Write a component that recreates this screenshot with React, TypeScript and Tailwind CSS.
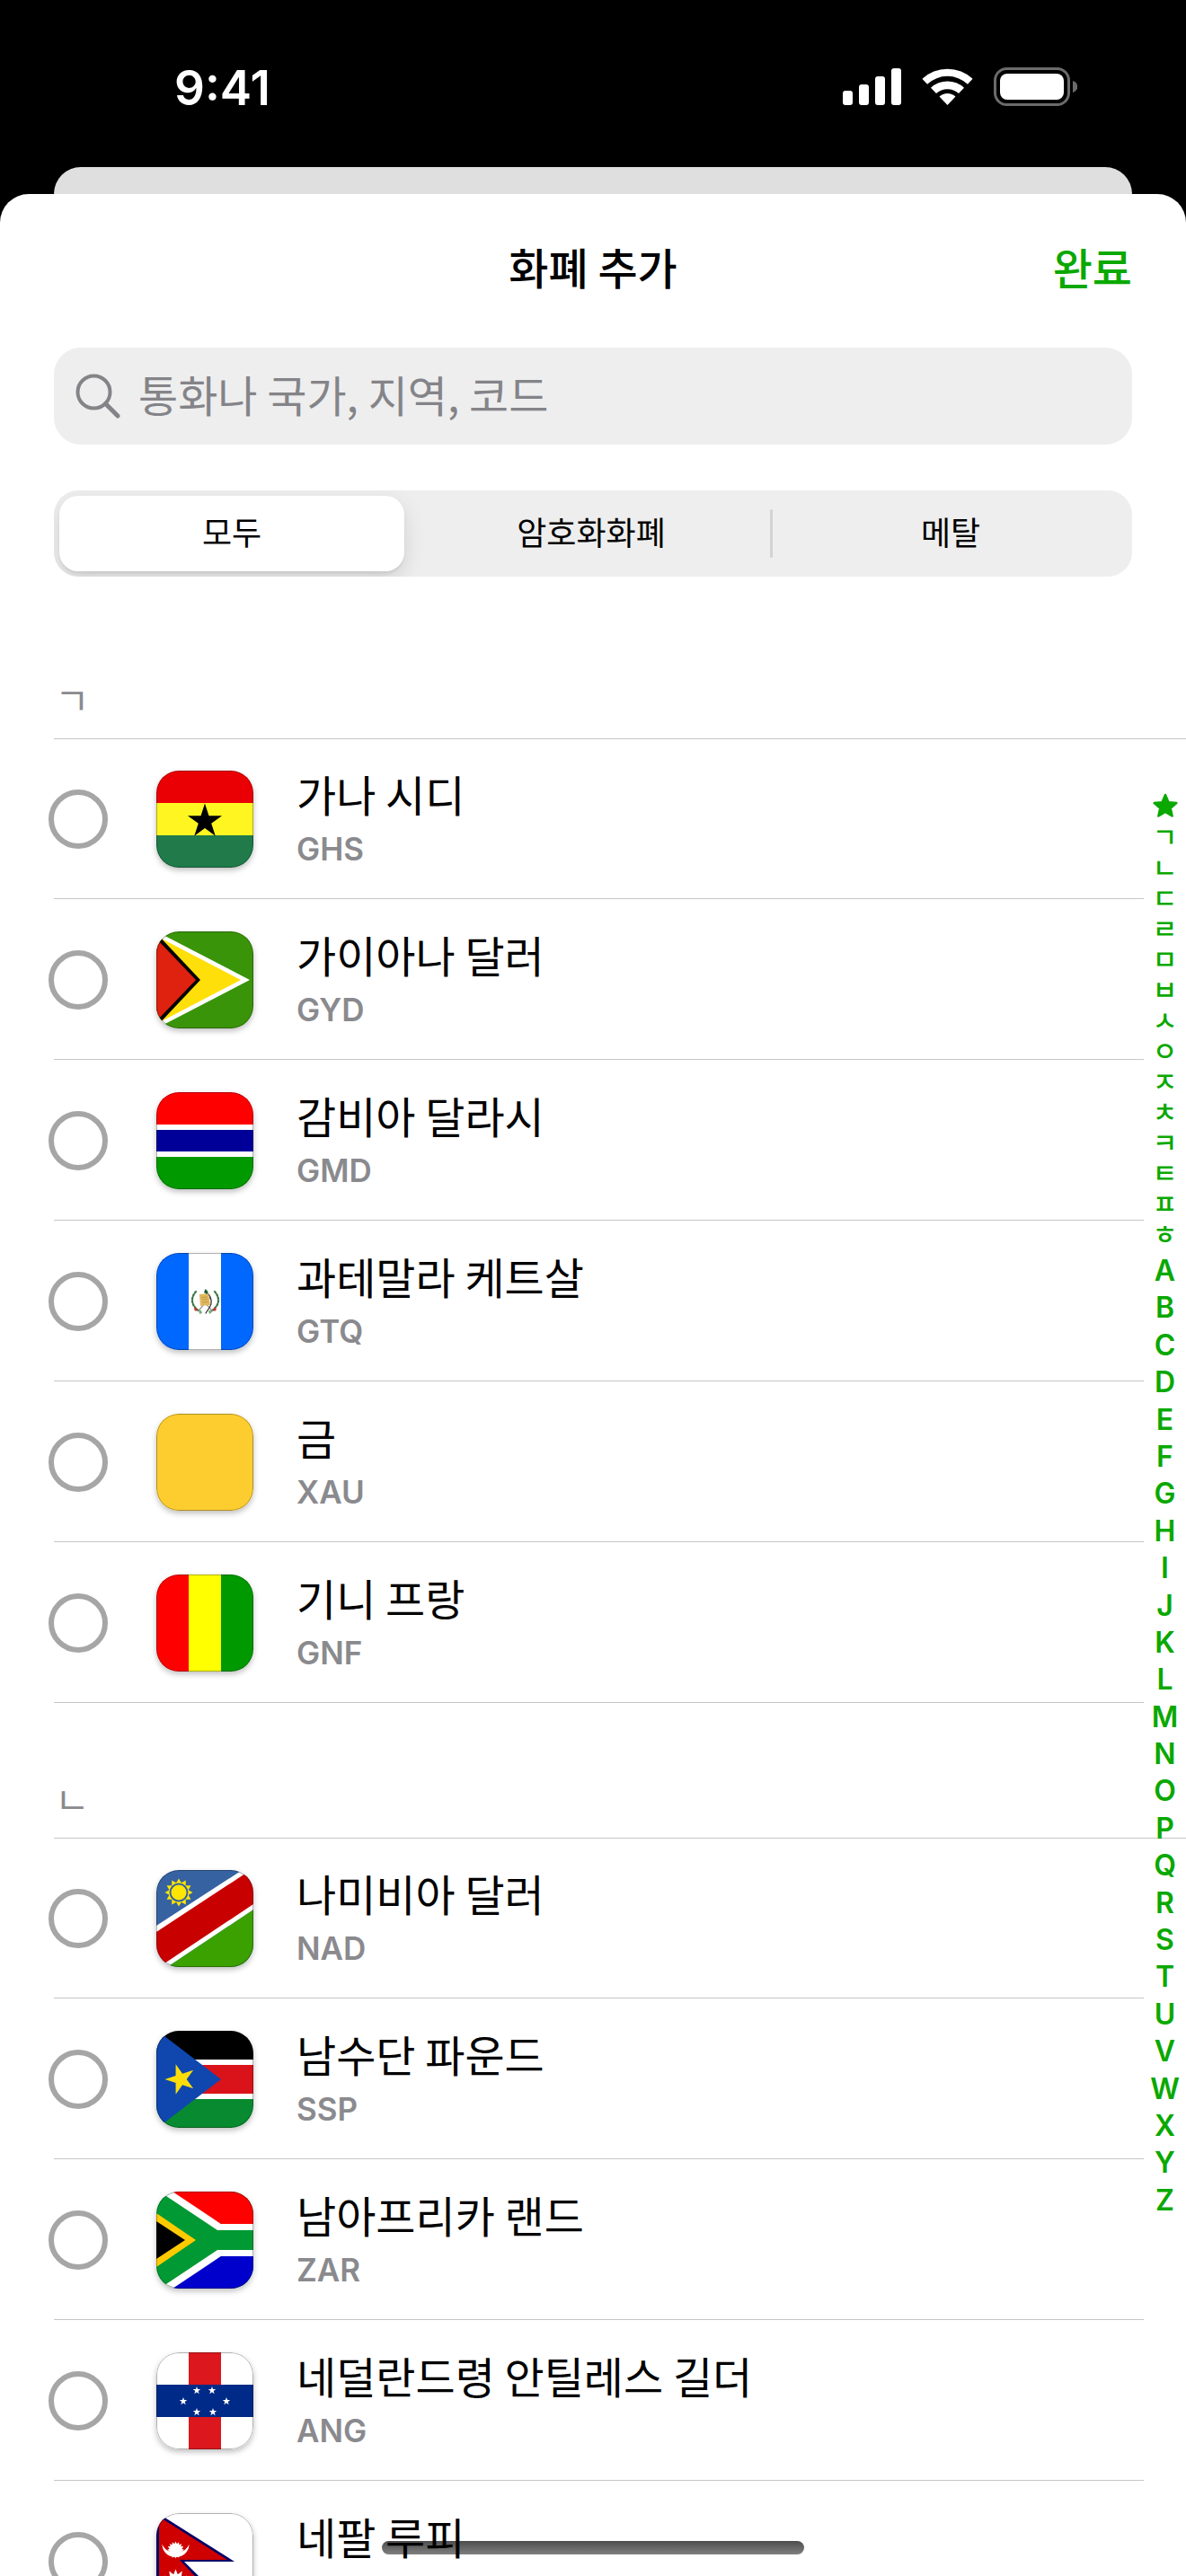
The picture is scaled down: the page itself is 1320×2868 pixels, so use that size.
import { useState } from "react";
import type { ReactNode } from "react";

interface Currency {
    code: string;
    name: string;
}

interface Section {
    letter: string;
    currencies: Currency[];
}

const sections: Section[] = [
    {
        letter: "ㄱ",
        currencies: [
            { code: "GHS", name: "가나 시디" },
            { code: "GYD", name: "가이아나 달러" },
            { code: "GMD", name: "감비아 달라시" },
            { code: "GTQ", name: "과테말라 케트살" },
            { code: "XAU", name: "금" },
            { code: "GNF", name: "기니 프랑" },
        ],
    },
    {
        letter: "ㄴ",
        currencies: [
            { code: "NAD", name: "나미비아 달러" },
            { code: "SSP", name: "남수단 파운드" },
            { code: "ZAR", name: "남아프리카 랜드" },
            { code: "ANG", name: "네덜란드령 안틸레스 길더" },
            { code: "NPR", name: "네팔 루피" },
        ],
    },
];

const tabs = ["모두", "암호화화폐", "메탈"];
const jamo = "ㄱㄴㄷㄹㅁㅂㅅㅇㅈㅊㅋㅌㅍㅎ".split("");
const latin = "ABCDEFGHIJKLMNOPQRSTUVWXYZ".split("");

// points of a star or sunburst, first tip at `turn` degrees from the top
function burst(cx: number, cy: number, outer: number, inner: number, tips = 5, turn = 0) {
    return Array.from({ length: tips * 2 }, (_, i) => {
        const a = ((turn - 90 + (i * 180) / tips) * Math.PI) / 180;
        const r = i % 2 ? inner : outer;
        return `${(cx + r * Math.cos(a)).toFixed(2)},${(cy + r * Math.sin(a)).toFixed(2)}`;
    }).join(" ");
}

const flags: Record<string, ReactNode> = {
    GHS: <>
        <path fill="#ea0004" d="M0 0h108v36H0z" />
        <path fill="#fff520" d="M0 36h108v36H0z" />
        <path fill="#207a4a" d="M0 72h108v36H0z" />
        <polygon points={burst(54, 56.5, 20, 7.6)} />
    </>,
    GYD: <>
        <path fill="#3a9409" d="M0 0h108v108H0z" />
        <path fill="#fff" d="M0 0l104 54L0 108z" />
        <path fill="#ffdf0a" d="M0 5l94 49L0 103z" />
        <path d="M0 2l49 52L0 106z" />
        <path fill="#df2110" d="M0 8l44 46L0 100z" />
    </>,
    GMD: <>
        <path fill="#fff" d="M0 0h108v108H0z" />
        <path fill="#f00" d="M0 0h108v36H0z" />
        <path fill="#009" d="M0 42h108v24H0z" />
        <path fill="#090" d="M0 72h108v36H0z" />
    </>,
    GTQ: <>
        <path fill="#0067ff" d="M0 0h108v108H0z" />
        <path fill="#fff" d="M36 0h36v108H36z" />
        <g fill="none" strokeLinecap="round">
            <path stroke="#4f8a5b" strokeWidth="2.4" strokeDasharray="1.4 2.4" d="M44 43c-6 7-6 15 4 22M65 43c6 7 6 15-4 22" />
            <path stroke="#2d6b3e" strokeWidth="1" d="M43 44c-5 7-4 15 5 21M66 44c5 7 4 15-5 21" />
            <path stroke="#9a9a9a" strokeWidth="1.2" d="M47 64l13-14M62 64L49 50" />
            <path stroke="#333" strokeWidth="1.3" d="M56 44c5 4 7 11 3 17l-4 6" />
        </g>
        <path fill="#e0b860" d="M48 46l10-1 2 13-11 1z" />
        <path stroke="#b88a35" strokeWidth=".7" d="M50.500 49.500l6-.5M51 52l6-.5M51 55l7-.5" />
        <path fill="#1f5c35" d="M53 44l1.500-4 3 3-1 3z" />
        <path fill="#c8372d" d="M43 60l3 3-2 2-2-2zM65 60l2 3-2 2-2-2z" />
        <path fill="#7cae7e" d="M47 63l3 1 1 3-3 1zM60 63l-2 2 1 3 3-2z" />
    </>,
    XAU: <path fill="#fdcd30" d="M0 0h108v108H0z" />,
    GNF: <>
        <path fill="#f00" d="M0 0h36v108H0z" />
        <path fill="#ff0" d="M36 0h36v108H36z" />
        <path fill="#090" d="M72 0h36v108H72z" />
    </>,
    NAD: <>
        <path fill="#3662a2" d="M0 0h108v108H0z" />
        <path fill="#3aa100" d="M0 116L108 44v64H0z" />
        <path fill="#fff" d="M0 62L108-8v52L0 116z" />
        <path fill="#c80000" d="M0 69L108-2v40L0 110z" />
        <polygon fill="#ffe600" points={burst(25, 25, 15.5, 11, 12)} />
        <circle cx="25" cy="25" r="9.500" fill="#ffe600" stroke="#3662a2" strokeWidth="2" />
    </>,
    SSP: <>
        <path fill="#fff" d="M0 0h108v108H0z" />
        <path d="M0 0h108v32H0z" />
        <path fill="#da131a" d="M0 38h108v32H0z" />
        <path fill="#078a30" d="M0 76h108v32H0z" />
        <path fill="#0f47af" d="M0-1l72 55L0 109z" />
        <polygon fill="#fcdd09" points={burst(27, 54, 17.5, 6.7, 5, -90)} />
    </>,
    ZAR: <>
        <path fill="#093" d="M0 0h108v108H0z" />
        <path fill="#fff" d="M2-1h18l52 37h36v7H68zM2 109h18l52-37h36v-7H68z" />
        <path fill="#f00" d="M18 0h90v36H72z" />
        <path fill="#00c" d="M18 108h90V72H72z" />
        <path fill="#ffcb00" d="M0 24l44 30L0 84z" />
        <path d="M0 33l32 21L0 75z" />
    </>,
    ANG: <>
        <path fill="#fff" d="M0 0h108v108H0z" />
        <path fill="#dc171d" d="M36 0h36v108H36z" />
        <path fill="#002a87" d="M0 36h108v36H0z" />
        {[[45, 42], [62, 42], [30, 54], [78, 54], [45, 66], [63, 66]].map(([x, y]) => (
            <polygon key={`${x}-${y}`} fill="#fff" points={burst(x, y + 0.5, 4.5, 1.8)} />
        ))}
    </>,
    NPR: <>
        <path fill="#fff" d="M0 0h108v108H0z" />
        <path fill="#006" d="M0-1l87 55H31l54 54H0z" />
        <path fill="#ce0000" d="M3 4l76 48H26l52 56H3z" />
        <path fill="#fff" d="M6.500 34.500c3 7 8 9 15 9s12-2 15-9c0 8-6 14.500-15 14.500s-15-6.500-15-14.500z" />
        <polygon fill="#fff" points={burst(21.5, 41, 9.5, 7, 16)} />
        <polygon fill="#fff" points={burst(21.5, 77, 14.5, 9, 12)} />
    </>,
};

export default function App() {
    const [tab, setTab] = useState(tabs[0]);

    return <div className="relative flex h-screen flex-col overflow-hidden bg-black font-['Noto_Sans_CJK_KR',sans-serif] text-black">
        <StatusBar />
        <div className="mx-[60px] h-[30px] shrink-0 rounded-t-[30px] bg-[#dfdfdf]"></div>
        <main className="relative grow rounded-t-[32px] bg-white">
            <header className="grid h-[166px] grid-cols-3 items-center px-[60px] pb-[6px] text-[48px] leading-[60px]">
                <h1 className="col-start-2 text-center font-medium">화폐 추가</h1>
                <button className="justify-self-end font-medium text-[#0aa800]">완료</button>
            </header>
            <div className="mx-[60px] mt-[5px] flex h-[108px] items-center gap-[20px] rounded-[30px] bg-[#eeeeef] px-6">
                <SearchIcon />
                <input
                    type="search"
                    aria-label="통화 검색"
                    placeholder="통화나 국가, 지역, 코드"
                    className="h-[84px] min-w-0 grow bg-transparent pb-[6px] text-[48px] outline-none placeholder:text-[#848488]"
                />
            </div>
            <div className="mx-[60px] mt-[51px] grid h-24 grid-cols-3 overflow-hidden rounded-[27px] bg-[#eeeeef] text-[36px]">
                {tabs.map((label, i) => (
                    <div key={label} className="flex items-center py-[6px] pl-[6px]">
                        <button
                            aria-pressed={tab === label}
                            onClick={() => setTab(label)}
                            className={`h-full grow rounded-[21px] pb-[6px] ${tab === label ? "bg-white shadow-[0_9px_24px_rgba(0,0,0,0.12),0_3px_3px_rgba(0,0,0,0.06)]" : ""}`}
                        >
                            {label}
                        </button>
                        <span className={`ml-[7px] h-[54px] w-[3px] rounded-full ${i === 1 ? "bg-[#d3d3d5]" : ""}`}></span>
                    </div>
                ))}
            </div>
            <div className="pt-[30px]">
                {sections.map((section) => (
                    <CurrencySection key={section.letter} {...section} />
                ))}
            </div>
            <IndexBar />
        </main>
        <div className="absolute bottom-6 left-1/2 h-[15px] w-[470px] -translate-x-1/2 rounded-full bg-linear-to-b from-black/70 to-black/50"></div>
    </div>
}

function CurrencySection({ letter, currencies }: Section) {
    return <section id={letter}>
        <h2 className="ml-[60px] flex h-[151px] items-end border-b border-[#c6c6c8] pb-[18px] pl-px text-[42px] leading-[52px] text-[#8a8a8e]">
            {letter}
        </h2>
        <ul className="mr-[47px] ml-[60px]">
            {currencies.map((currency) => (
                <CurrencyRow key={currency.code} {...currency} />
            ))}
        </ul>
    </section>
}

function CurrencyRow({ code, name }: Currency) {
    return <li className="h-[179px] border-b border-[#c6c6c8] first:h-[178px]">
        <label className="-ml-[6px] flex h-full items-center pt-px">
            <input type="checkbox" className="size-[66px] shrink-0 appearance-none rounded-full border-[6px] border-[#a6a6a6] checked:border-[#0aa800] checked:bg-[#0aa800]" />
            <Flag code={code} />
            <span className="ml-[48px] flex flex-col gap-[6px]">
                <span className="text-[48px] leading-[60px]">{name}</span>
                <span className="font-['Inter',sans-serif] text-[35px] leading-[52px] font-semibold text-[#8a8a8e]">{code}</span>
            </span>
        </label>
    </li>
}

function Flag({ code }: { code: string }) {
    return <span className="ml-[54px] size-[108px] shrink-0 overflow-hidden rounded-[25px] shadow-[0_3px_6px_rgba(0,0,0,0.25)]">
        <svg viewBox="0 0 108 108" className="size-full" aria-hidden="true">
            {flags[code]}
            <rect x=".5" y=".5" width="107" height="107" rx="24.500" fill="none" stroke="#000" strokeOpacity=".3" />
        </svg>
    </span>
}

function IndexBar() {
    return <nav aria-label="색인" className="absolute top-[665px] right-0 flex w-[47px] flex-col text-center text-[#0aa800]">
        <a href="#top" aria-label="즐겨찾기" className="flex h-[32px] items-center justify-center">
            <svg viewBox="0 0 30 30" className="size-[30px]" aria-hidden="true">
                <polygon points={burst(15, 16, 13, 6)} fill="currentColor" stroke="currentColor" strokeWidth="2.500" strokeLinejoin="round" />
            </svg>
        </a>
        {jamo.map((letter) => (
            <a key={letter} href={`#${letter}`} className="h-[34px] text-[30px] leading-[34px] font-medium">{letter}</a>
        ))}
        <div className="mt-[5px] flex h-[1076px] flex-col font-['Inter',sans-serif] text-[32px] leading-[41px] font-semibold">
            {latin.map((letter) => (
                <a key={letter} href={`#${letter}`} className="flex-1">{letter}</a>
            ))}
        </div>
    </nav>
}

function StatusBar() {
    return <div id="top" className="flex h-[186px] shrink-0 items-start justify-between pt-[75px] pr-[121px] pl-[194px] text-white">
        <div className="font-['Inter',sans-serif] text-[53px] leading-[46px] font-semibold">9:41</div>
        <div className="flex gap-[23px]">
            <svg width="65" height="43" viewBox="0 0 65 43" fill="currentColor" aria-hidden="true">
                <rect y="26" width="11" height="16" rx="3" />
                <rect x="18" y="19" width="11" height="23" rx="3" />
                <rect x="36" y="10" width="11" height="32" rx="3" />
                <rect x="54" y="1" width="11" height="41" rx="3" />
            </svg>
            <svg width="57" height="43" viewBox="0 0 57 43" fill="currentColor" aria-hidden="true">
                <path d="M.4 12.800a41 41 0 0 1 56.200 0L51 18.700a33 33 0 0 0-45 0z" />
                <path d="M10 22.800a27 27 0 0 1 37 0L41 29a18.500 18.500 0 0 0-25 0z" />
                <path d="M19.500 32.500a13 13 0 0 1 18 0l-9 9.500z" />
            </svg>
            <svg width="93" height="43" viewBox="0 0 93 43" fill="currentColor" aria-hidden="true">
                <rect x="1.500" y="1.500" width="82" height="40" rx="13" fill="none" stroke="#6b6b6b" strokeWidth="3" />
                <rect x="7" y="7" width="71" height="29" rx="8" />
                <path fill="#6b6b6b" d="M88 15c7 2 7 11 0 13z" />
            </svg>
        </div>
    </div>
}

function SearchIcon() {
    return <svg viewBox="0 0 50 50" className="size-[50px] shrink-0" fill="none" stroke="#848488" aria-hidden="true">
        <circle cx="20.500" cy="20.500" r="18" strokeWidth="4" />
        <path d="M33.500 33.500l13.500 13.500" strokeWidth="5" strokeLinecap="round" />
    </svg>
}
